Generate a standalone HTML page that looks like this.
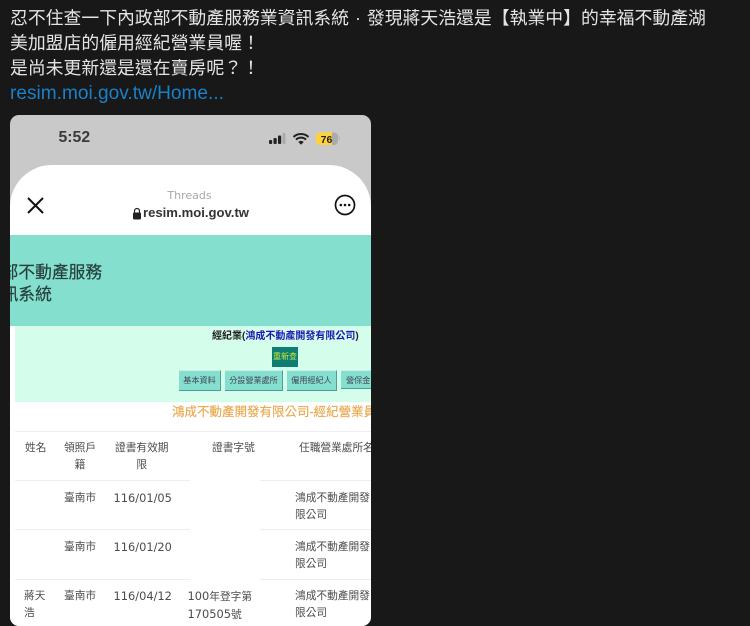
<!DOCTYPE html>
<html lang="zh-Hant"><head><meta charset="utf-8"><style>
html,body{margin:0;padding:0;background:#181818}
body{width:750px;height:626px;overflow:hidden;position:relative;font-family:"Liberation Sans","Noto Sans CJK TC",sans-serif}
.l{position:absolute;white-space:nowrap}
.t{left:10px;color:#e4e4e4;font-size:17.85px;line-height:25px;height:25px}
#shot{position:absolute;left:10px;top:115px;width:361px;height:511px;border-radius:9px;overflow:hidden;background:#c9c9c9}
.c{font-family:"DejaVu Sans","Noto Sans CJK TC",sans-serif;font-size:10.7px;line-height:16.5px;color:#4c4c4c}
.d{font-size:11.4px}
.hr{position:absolute;left:5px;width:356px;height:1px;background:#eee}
.b{position:absolute;top:255px;height:19px;background:#84dfce;border-bottom:1px solid #4f9d96;border-right:1px solid #4f9d96;border-top:1px solid #cfeee8;font-size:8.1px;line-height:19px;color:#445;text-align:center;white-space:nowrap;overflow:hidden}
</style></head><body>
<div class="l t" style="top:6px">忍不住查一下內政部不動產服務業資訊系統<span style="display:inline-block;width:17.85px;text-align:center">·</span>發現蔣天浩還是【執業中】的幸福不動產湖</div>
<div class="l t" style="top:31px">美加盟店的僱用經紀營業員喔！</div>
<div class="l t" style="top:56px">是尚未更新還是還在賣房呢？！</div>
<div class="l" style="left:10px;top:81px;font-size:19.1px;line-height:25px;color:#1a80c8">resim.moi.gov.tw/Home...</div>
<div id="shot">
<div class="l" style="left:48.500px;top:13px;font-size:15.800px;line-height:20px;font-weight:700;color:#3a3a3a">5:52</div>
<svg class="l" style="left:258px;top:16px" width="90" height="16" viewBox="0 0 90 16">
<rect x="1" y="9" width="3.200" height="4" rx="1" fill="#222"/><rect x="5.500" y="7" width="3.200" height="6" rx="1" fill="#222"/><rect x="10" y="4.500" width="3.200" height="8.500" rx="1" fill="#222"/><rect x="14.500" y="2" width="3" height="11" rx="1" fill="#aaa"/>
<path d="M25.500 6a11 11 0 0 1 15 0M28 8.700a7.200 7.200 0 0 1 10 0" fill="none" stroke="#222" stroke-width="2"/><path d="M30.300 11a3.800 3.800 0 0 1 5.400 0L33 13.800z" fill="#222"/>
<rect x="48" y="1.500" width="22" height="12.500" rx="4" fill="#ffd23c"/><path d="M64 1.500h2a4 4 0 0 1 4 4v4.500a4 4 0 0 1-4 4h-2z" fill="#aaa"/><rect x="70.800" y="5.500" width="1.200" height="4" rx=".6" fill="#b5b5b5"/>
<text x="58.500" y="11.800" text-anchor="middle" font-family="Liberation Sans" font-weight="700" font-size="10.500" fill="#222">76</text></svg>
<div style="position:absolute;left:0;top:50px;width:361px;height:470px;background:#fff;border-radius:42px 42px 0 0"></div>
<div class="l" style="left:-1px;width:361px;text-align:center;top:74px;font-size:11px;line-height:14px;color:#a8a8a8;font-family:'DejaVu Sans',sans-serif">Threads</div>
<svg class="l" style="left:122px;top:92px" width="10" height="13" viewBox="0 0 10 13"><path d="M2.500 6V4a2.500 2.500 0 0 1 5 0v2" fill="none" stroke="#222" stroke-width="1.200"/><rect x="1" y="5.500" width="8" height="7" rx="1.200" fill="#222"/></svg>
<div class="l" style="left:133px;top:90px;font-size:13.100px;line-height:16px;color:#333;font-weight:700">resim.moi.gov.tw</div>
<svg class="l" style="left:16px;top:81px" width="19" height="19" viewBox="0 0 19 19"><path d="M2 2L17 17M17 2L2 17" stroke="#111" stroke-width="2" fill="none"/></svg>
<svg class="l" style="left:324px;top:79px" width="22" height="22" viewBox="0 0 22 22"><circle cx="11" cy="11" r="9.500" fill="none" stroke="#111" stroke-width="1.700"/><circle cx="6.800" cy="11" r="1.300" fill="#111"/><circle cx="11" cy="11" r="1.300" fill="#111"/><circle cx="15.200" cy="11" r="1.300" fill="#111"/></svg>
<div style="position:absolute;left:0;top:120px;width:361px;height:91px;background:#84dfce"></div>
<div class="l" style="left:0;top:147px;width:100px;overflow:hidden;font-size:16.800px;line-height:22px;color:#27403c;-webkit-text-stroke:.2px #27403c"><span style="margin-left:-8.500px">部不動產服務</span></div>
<div class="l" style="left:0;top:169px;width:60px;overflow:hidden;font-size:16.800px;line-height:22px;color:#27403c;-webkit-text-stroke:.2px #27403c"><span style="margin-left:-8.500px">訊系統</span></div>
<div style="position:absolute;left:5px;top:211px;width:356px;height:76px;background:#d5fdeb"></div>
<div class="l" style="left:202px;top:214px;font-size:10px;line-height:16px;font-weight:700;color:#222">經紀業(<span style="color:#1a1ab0">鴻成不動產開發有限公司</span>)</div>
<div class="l" style="left:262px;top:232px;width:26px;height:20px;background:#0e7e74;color:#c8e832;font-size:8px;line-height:20px;text-align:center">重新查</div>
<div class="b" style="left:169px;width:41px">基本資料</div>
<div class="b" style="left:215px;width:57px">分設營業處所</div>
<div class="b" style="left:277px;width:49px">僱用經紀人</div>
<div class="b" style="left:331px;width:30px;text-align:left;padding-left:5px;box-sizing:border-box;border-right:0">營保金</div>
<div class="l" style="left:162px;top:288px;width:199px;overflow:hidden;font-size:12.500px;line-height:18px;color:#e8a94f;-webkit-text-stroke:.15px #e8a94f">鴻成不動產開發有限公司-經紀營業員</div>
<div class="hr" style="top:316px"></div><div class="hr" style="top:365px"></div><div class="hr" style="top:414px"></div><div class="hr" style="top:464px"></div>
<div style="position:absolute;left:180px;top:360px;width:70px;height:105px;background:#fff"></div>
<div class="l c" style="left:15px;top:325px">姓名</div>
<div class="l c" style="left:44px;top:325px;width:52px;text-align:center">領照戶<br>籍</div>
<div class="l c" style="left:105px;top:325px;text-align:center">證書有效期<br>限</div>
<div class="l c" style="left:202px;top:325px">證書字號</div>
<div class="l c" style="left:289px;top:325px;width:72px;overflow:hidden">任職營業處所名</div>
<div class="l c" style="left:54px;top:375px">臺南市</div><div class="l c d" style="left:103.500px;top:375px">116/01/05</div>
<div class="l c" style="left:285px;top:375px;width:76px;overflow:hidden">鴻成不動產開發<br>限公司</div>
<div class="l c" style="left:54px;top:424px">臺南市</div><div class="l c d" style="left:103.500px;top:424px">116/01/20</div>
<div class="l c" style="left:285px;top:424px;width:76px;overflow:hidden">鴻成不動產開發<br>限公司</div>
<div class="l c" style="left:14px;top:473px">蔣天<br>浩</div>
<div class="l c" style="left:54px;top:473px">臺南市</div><div class="l c d" style="left:103.500px;top:473px">116/04/12</div>
<div class="l c" style="left:177.500px;top:473px"><span class="d">100</span>年登字第<br><span class="d">170505</span>號</div>
<div class="l c" style="left:285px;top:473px;width:76px;overflow:hidden">鴻成不動產開發<br>限公司</div>
</div>
</body></html>
